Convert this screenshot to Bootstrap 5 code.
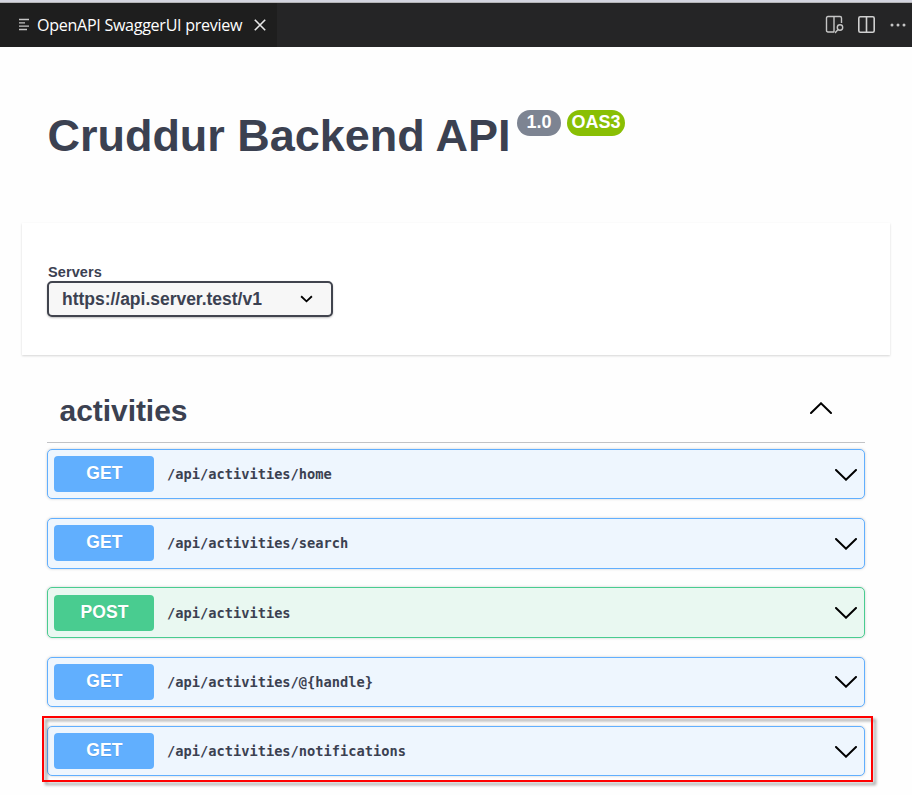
<!DOCTYPE html>
<html lang="en">
<head>
<meta charset="utf-8">
<meta name="viewport" content="width=device-width, initial-scale=1">
<title>OpenAPI SwaggerUI preview</title>
<link href="https://cdn.jsdelivr.net/npm/bootstrap@5.3.0/dist/css/bootstrap.min.css" rel="stylesheet">
<style>
body{background:#fefefe;color:#3b4151;font-family:"Liberation Sans",Arial,sans-serif;overflow:hidden;height:795px}
.tabbar{height:47px;background:#252526;border-top:2px solid #d4d5e0;box-shadow:inset 0 1px 0 #b4b4b6}
.tab-item{width:277px;margin-top:1px;background:#1e1e1e;color:#fff;font:16.1px "Open Sans","Segoe UI",sans-serif;letter-spacing:-.3px;padding-left:18px}
.tab-item span{width:205px;margin-left:7px;white-space:nowrap}
.tab-close{margin-left:8px}
.split-icon{margin-left:14px}
.dots-icon{margin:0 2px 0 15px}
.dots-icon circle{fill:#c5c5c5}
.api-head{height:176px;padding:60px 47.5px 0}
.api-title{font-size:45px;line-height:58px;font-weight:700;letter-spacing:-.02px;white-space:nowrap;width:469.5px}
.pill{height:26px;margin-top:3px;border-radius:13px;color:#fff;font-weight:700;font-size:18px;line-height:24px;text-align:center}
.pill-ver{width:44px;background:#7d8492}
.pill-oas{width:58px;margin-left:6px;background:#89bf04}
.servers{margin:0 22px;height:132px;background:#fff;box-shadow:0 1px 2px rgba(0,0,0,.16);padding:41px 25px 0}
.servers label{font-size:14.5px;font-weight:700;line-height:17px;display:block;margin:0 0 0 1px;letter-spacing:.1px}
.server-select{width:286px;height:36px;border:2px solid #41444e;border-radius:5px;background:#f7f7f7;box-shadow:0 1px 2px rgba(0,0,0,.25);font-size:17.5px;font-weight:700;padding:0 18px 0 13px;letter-spacing:-.02px}
.tag-head{margin:0 47px 5.75px;height:88px;border-bottom:1px solid #c2c3c6;padding:23px 33.5px 0 12.5px}
.tag-head h2{font-size:30px;line-height:36px;font-weight:700;margin:15px 0 0;letter-spacing:-.05px}
.ops{margin:0 47px}
.op{height:50.5px;margin-bottom:18.75px;border:1px solid #61affe;border-radius:5px;background:#eef6fe;box-shadow:0 0 3px rgba(0,0,0,.19);padding:0 7.5px 0 6px}
.op svg{margin-top:1px}
.op-post{border-color:#49cc90;background:#e9f8f1}
.verb{width:100px;height:36px;border-radius:4px;background:#61affe;color:#fff;font-size:17.5px;font-weight:700;text-align:center;line-height:35.6px;padding-left:1px;letter-spacing:.1px;text-shadow:0 1px 0 rgba(0,0,0,.1)}
.op-post .verb{background:#49cc90;line-height:35px}
.path{font:700 13.69px "DejaVu Sans Mono",monospace;margin-left:13px}
.callout{left:-6px;top:-11px;width:831px;height:66px;border:2px solid #f00;filter:drop-shadow(3px 3px 1.5px rgba(0,0,0,.4))}
svg{display:block;flex:none;fill:none}
</style>
</head>
<body>
<header class="tabbar d-flex justify-content-between">
  <div class="tab-item d-flex align-items-center">
    <svg width="12" height="14" viewBox="0 0 12 14" stroke="#c5c5c5" stroke-width="1.3"><path d="M1 1.5h10M1 4.800h6M1 8.200h10M1 11.500h8"/></svg>
    <span>OpenAPI SwaggerUI preview</span>
    <svg class="tab-close" width="20" height="12" viewBox="-4 0 20 12" stroke="#e8e8e8" stroke-width="1.6"><path d="M.8.8l10.4 10.4M11.2.8L.8 11.2"/></svg>
  </div>
  <div class="d-flex align-items-center pe-1">
    <svg width="19" height="19" viewBox="0 0 19 19" stroke="#c5c5c5" stroke-width="1.4"><path d="M9 17H3Q1.5 17 1.5 15.5V3Q1.5 1.5 3 1.5H15Q16.5 1.5 16.5 3V8M9 1.5V17"/><circle cx="15" cy="12.5" r="2.7"/><path d="M13 14.5L10 18"/></svg>
    <svg class="split-icon" width="17" height="17" viewBox="0 0 17 17" stroke="#d0d0d0" stroke-width="1.6"><rect x=".8" y=".8" width="15.4" height="15.4" rx="1.5"/><path d="M8.5 1v15"/></svg>
    <svg class="dots-icon" width="16" height="4" viewBox="0 0 16 4"><circle cx="2" cy="2" r="1.5"/><circle cx="8" cy="2" r="1.5"/><circle cx="14" cy="2" r="1.5"/></svg>
  </div>
</header>
<main>
  <section class="api-head d-flex align-items-start">
    <h1 class="api-title mb-0">Cruddur Backend API</h1>
    <span class="pill pill-ver">1.0</span><span class="pill pill-oas">OAS3</span>
  </section>
  <section class="servers">
    <label>Servers</label>
    <div class="server-select d-flex align-items-center justify-content-between">
      <span>https://api.server.test/v1</span>
      <svg width="13" height="8" viewBox="0 0 14 8" stroke="#000" stroke-width="2"><path d="M1.2 1l5.8 5.5L12.8 1"/></svg>
    </div>
  </section>
  <section>
    <div class="tag-head d-flex justify-content-between align-items-start">
      <h2>activities</h2>
      <svg class="mt-4" width="22" height="12" viewBox="0 0 22 12" stroke="#000" stroke-width="2" stroke-linecap="round"><path d="M1 11L11 1.3L21 11"/></svg>
    </div>
    <div class="ops">
      <div class="op d-flex align-items-center"><span class="verb">GET</span><span class="path">/api/activities/home</span><svg class="ms-auto" width="22" height="12" viewBox="0 0 22 12" stroke="#000" stroke-width="2" stroke-linecap="round"><path d="M1 1L11 10.7L21 1"/></svg></div>
      <div class="op d-flex align-items-center"><span class="verb">GET</span><span class="path">/api/activities/search</span><svg class="ms-auto" width="22" height="12" viewBox="0 0 22 12" stroke="#000" stroke-width="2" stroke-linecap="round"><path d="M1 1L11 10.7L21 1"/></svg></div>
      <div class="op op-post d-flex align-items-center"><span class="verb">POST</span><span class="path">/api/activities</span><svg class="ms-auto" width="22" height="12" viewBox="0 0 22 12" stroke="#000" stroke-width="2" stroke-linecap="round"><path d="M1 1L11 10.7L21 1"/></svg></div>
      <div class="op d-flex align-items-center"><span class="verb">GET</span><span class="path">/api/activities/@{handle}</span><svg class="ms-auto" width="22" height="12" viewBox="0 0 22 12" stroke="#000" stroke-width="2" stroke-linecap="round"><path d="M1 1L11 10.7L21 1"/></svg></div>
      <div class="op d-flex align-items-center position-relative"><span class="verb">GET</span><span class="path">/api/activities/notifications</span><svg class="ms-auto" width="22" height="12" viewBox="0 0 22 12" stroke="#000" stroke-width="2" stroke-linecap="round"><path d="M1 1L11 10.7L21 1"/></svg><div class="callout position-absolute"></div></div>
    </div>
  </section>
</main>
<script src="https://cdn.jsdelivr.net/npm/bootstrap@5.3.0/dist/js/bootstrap.bundle.min.js"></script>
</body>
</html>
